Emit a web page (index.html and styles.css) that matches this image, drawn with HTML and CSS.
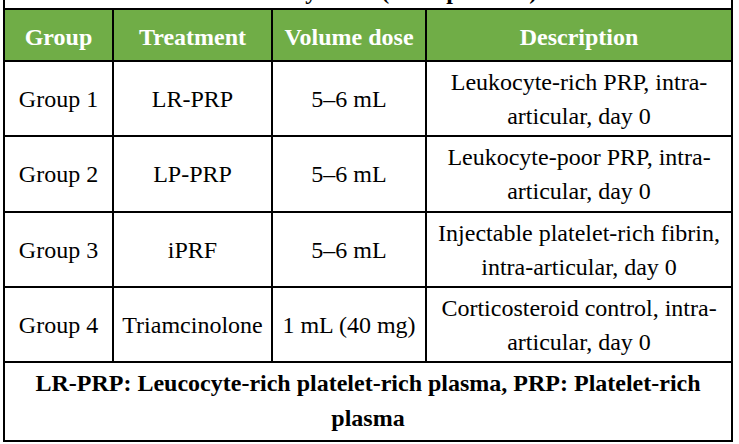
FILE: index.html
```html
<!DOCTYPE html>
<html lang="en">
<head>
<meta charset="utf-8">
<title>Study arms</title>
<link rel="stylesheet" href="styles.css">
</head>
<body>
<table class="grid">
  <colgroup>
    <col class="c1"><col class="c2"><col class="c3"><col class="c4">
  </colgroup>
  <tr class="cap-row">
    <td colspan="4" class="cap-cell"><div class="cap-clip"><div class="cap-text">Table 1: Study arms (n = 8 per arm)</div></div></td>
  </tr>
  <tr class="head">
    <th>Group</th><th>Treatment</th><th>Volume dose</th><th>Description</th>
  </tr>
  <tr class="row">
    <td>Group 1</td><td>LR-PRP</td><td>5–6 mL</td><td>Leukocyte-rich PRP, intra-<br>articular, day 0</td>
  </tr>
  <tr class="row row-tall">
    <td>Group 2</td><td>LP-PRP</td><td>5–6 mL</td><td>Leukocyte-poor PRP, intra-<br>articular, day 0</td>
  </tr>
  <tr class="row">
    <td>Group 3</td><td>iPRF</td><td>5–6 mL</td><td>Injectable platelet-rich fibrin,<br>intra-articular, day 0</td>
  </tr>
  <tr class="row">
    <td>Group 4</td><td class="tight">Triamcinolone</td><td class="tight">1 mL (40 mg)</td><td>Corticosteroid control, intra-<br>articular, day 0</td>
  </tr>
  <tr class="foot">
    <td colspan="4">LR-PRP: Leucocyte-rich platelet-rich plasma, PRP: Platelet-rich<br>plasma</td>
  </tr>
</table>
</body>
</html>
```

FILE: styles.css
```css
html, body {
  margin: 0;
  padding: 0;
  background: #ffffff;
}

body {
  font-family: "Liberation Serif", "Times New Roman", serif;
  color: #000000;
  overflow: hidden;
}

.grid {
  margin-left: 3px;
  width: 728px;
  table-layout: fixed;
  border-collapse: collapse;
  font-size: 24px;
  line-height: 34px;
}

.c1 { width: 109px; }
.c2 { width: 159px; }
.c3 { width: 154px; }
.c4 { width: 306px; }

.grid td,
.grid th {
  border: 2px solid #000000;
  padding: 0 5px;
  text-align: center;
  vertical-align: middle;
}

.cap-row .cap-cell {
  border-top: none;
  padding: 0;
  height: 8px;
}

.cap-clip {
  height: 8px;
  overflow: hidden;
  padding-right: 30px;
}

.cap-text {
  margin-top: -23px;
  font-weight: bold;
  line-height: 28px;
  white-space: nowrap;
}

.head th {
  background: #70ad47;
  color: #ffffff;
  font-weight: bold;
  height: 52px;
  padding-top: 3px;
  padding-bottom: 0;
  box-sizing: border-box;
}

.row td {
  height: 75px;
  box-sizing: border-box;
}

.row-tall td {
  height: 76px;
}

.row .tight {
  padding: 0 2px;
}

.foot td {
  font-weight: bold;
  line-height: 35px;
  height: 76px;
  padding: 3px 5px 4px;
  box-sizing: border-box;
}
```
